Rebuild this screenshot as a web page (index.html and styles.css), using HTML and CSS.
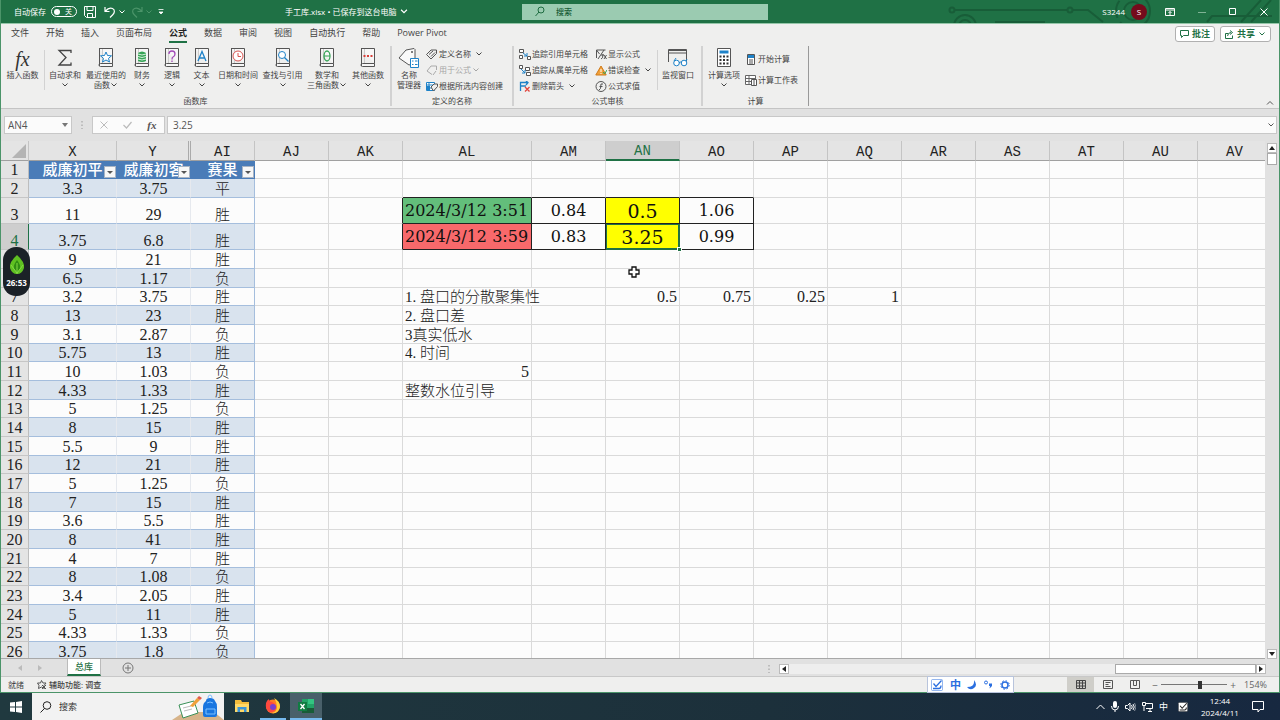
FILE: index.html
```html
<!DOCTYPE html>
<html lang="zh-CN">
<head>
<meta charset="utf-8">
<title>手工库.xlsx</title>
<link rel="stylesheet" href="styles.css">
</head>
<body>
<svg class="defs" width="0" height="0" aria-hidden="true">
  <defs>
    <symbol id="chev" viewBox="0 0 8 6"><path d="M1.500 1.500 4 4l2.500-2.500" fill="none" stroke="currentColor"/></symbol>
    <symbol id="book" viewBox="0 0 16 20"><path d="M1.500 1v17M1 .5h13.500v15H2.500Q1 15.500 1 17t1.500 1.500h12v-3" fill="#f7f7f7" stroke="#555"/><path d="M4.500 1v14" stroke="#ccc"/></symbol>
    <symbol id="tag" viewBox="0 0 22 20"><path d="M1 10 8 2l8-1.500 1 1V15l-6 2z" fill="#fafafa" stroke="#555"/><circle cx="14" cy="4" r="1" fill="#555"/></symbol>
    <symbol id="sogou" viewBox="0 0 12 12"><rect x=".5" y=".5" width="11" height="11" rx="1" fill="#fff" stroke="currentColor" stroke-opacity=".5"/><path d="M2.500 4.500 5 7.500 10.500 1.500M2 9.500h6q2 0 2-3" fill="none" stroke="currentColor" stroke-width="1.300"/></symbol>
  </defs>
</svg>

<div class="app">
  <header class="titlebar">
    <svg class="circuit" width="340" height="23" viewBox="0 0 340 23" fill="none" stroke="#185d38" stroke-width="2"><circle cx="13" cy="10" r="2.500"/><path d="M16 10h112M134 10h15l15 12M56 22h50M268 22l5-6h60M302 22l20-22M312 22l20-22"/><circle cx="131" cy="10" r="2.500"/><circle cx="26" cy="26" r="11"/><circle cx="26" cy="26" r="6"/><circle cx="194" cy="11" r="17" stroke-dasharray="18 5"/><circle cx="194" cy="11" r="9"/></svg>
    <div class="quick">
      <label class="autosave">自动保存 <button class="toggle" aria-label="自动保存"><span class="knob"></span>关</button></label>
      <button class="bare save" aria-label="保存"><svg width="12" height="12" viewBox="0 0 12 12" fill="none" stroke="#fff"><path d="M.5.5h11v11h-9l-2-2zM3 .5v4h6v-4M3.500 11.500V7.500h5v4"/></svg></button>
      <button class="bare undo" aria-label="撤消"><svg width="12" height="12" viewBox="0 0 12 12" fill="none" stroke="#fff" stroke-width="1.200"><path d="M1 1v4.500h4.500M1.500 5Q5 1 8.500 2.500c3 1.500 2 4.500 0 6.500L6 11.500"/></svg><svg width="8" height="6"><use href="#chev"/></svg></button>
      <button class="bare redo" aria-label="恢复"><svg width="12" height="12" viewBox="0 0 12 12" fill="none" stroke="currentColor" stroke-width="1.200"><path d="M11 1v4.500H6.500M10.500 5Q7 1 3.500 2.500c-3 1.500-2 4.500 0 6.500L6 11.500"/></svg><svg width="8" height="6"><use href="#chev"/></svg></button>
      <button class="bare" aria-label="自定义快速访问工具栏"><svg width="8" height="8" viewBox="0 0 8 8"><path d="M1.500 1.500h5M2 4h4L4 6z" fill="#fff" stroke="#fff" stroke-width=".8"/></svg></button>
    </div>
    <button class="bare doc">手工库.xlsx • 已保存到这台电脑<svg width="10" height="7" viewBox="0 0 8 6"><use href="#chev"/></svg></button>
    <label class="search"><svg width="10" height="11" viewBox="0 0 10 11" fill="none" stroke="#1e6b40"><circle cx="6" cy="4" r="3"/><path d="M4 6 .5 10"/></svg><input type="text" placeholder="搜索" aria-label="搜索"></label>
    <div class="account"><span>S3244</span><span class="avatar">S</span>
      <button class="bare" aria-label="功能区显示选项"><svg width="10" height="8" viewBox="0 0 10 8" fill="none" stroke="#fff"><path d="M.5.5h9v7h-9zM.5 2h9M5 7V3.500M3.500 5 5 3.500 6.500 5"/></svg></button>
      <button class="bare" aria-label="最小化"><svg width="8" height="8" viewBox="0 0 8 8" stroke="#7fb395"><path d="M0 4.500h8"/></svg></button>
      <button class="bare" aria-label="最大化"><svg width="8" height="8" viewBox="0 0 8 8" fill="none" stroke="#fff"><path d="M.5.5h6v6h-6z"/></svg></button>
      <button class="bare" aria-label="关闭"><svg width="8" height="8" viewBox="0 0 8 8" stroke="#fff"><path d="m.5.5 7 7m0-7-7 7"/></svg></button>
    </div>
  </header>

  <nav class="tabs">
    <button>文件</button><button>开始</button><button>插入</button><button>页面布局</button><button class="active">公式</button><button>数据</button><button>审阅</button><button>视图</button><button>自动执行</button><button>帮助</button><button>Power Pivot</button>
    <div class="share">
      <button class="pill"><svg width="9" height="8" viewBox="0 0 9 8" fill="none" stroke="currentColor"><path d="M.5.5h8v5h-5l-2 2v-2h-1z"/></svg>批注</button>
      <button class="pill"><svg width="9" height="9" viewBox="0 0 9 9" fill="none" stroke="currentColor"><path d="M3 3.500H.5v5h7v-3M2.500 6Q3 2.500 6 2.500M5 .5l2.500 2L5 4.500"/></svg>共享<svg width="8" height="6"><use href="#chev"/></svg></button>
    </div>
  </nav>

  <section class="ribbon">
    <div class="group">
      <div class="tools">
        <button class="big w43"><span class="fx-large">fx</span>插入函数</button>
        <span class="divider"></span>
        <button class="big w40"><svg width="16" height="20" viewBox="0 0 16 20" fill="none" stroke="#444" stroke-width="1.300"><path d="M14 5V2.500H2L9 9.500 2 17h12v-2.500"/></svg>自动求和<svg width="8" height="6"><use href="#chev"/></svg></button>
        <button class="big w42"><svg width="16" height="20"><use href="#book"/><path d="m8 4 1.500 3.500 4 .3-3 2.600 1 3.600L8 12l-3.500 2 1-3.600-3-2.600 4-.3z" fill="#fff" stroke="#1e82c8"/></svg>最近使用的<span>函数<svg width="8" height="6"><use href="#chev"/></svg></span></button>
        <button class="big w30"><svg width="16" height="20"><use href="#book"/><path d="M4 5q4-3 8 0v8q-4 2-8 0z" fill="#36a456"/><path d="M4 6q4 2 8 0M4 8.500q4 2 8 0M4 11q4 2 8 0" stroke="#d6f2dc" fill="none"/></svg>财务<svg width="8" height="6"><use href="#chev"/></svg></button>
        <button class="big w30"><svg width="16" height="20"><use href="#book"/><path d="M5 6q0-3 3-3t3 3q0 2-2 3-1 .5-1 2.500M8 12.500v1.500" fill="none" stroke="#a24ab8" stroke-width="1.300"/></svg>逻辑<svg width="8" height="6"><use href="#chev"/></svg></button>
        <button class="big w29"><svg width="16" height="20"><use href="#book"/><path d="M4 13 8 3.500 12 13M5.500 10h5" fill="none" stroke="#1e82c8" stroke-width="1.300"/></svg>文本<svg width="8" height="6"><use href="#chev"/></svg></button>
        <button class="big w44"><svg width="16" height="20"><use href="#book"/><circle cx="8" cy="8" r="5" fill="#fff" stroke="#d9534f"/><path d="M8 5v3.500h3" fill="none" stroke="#d9534f"/></svg>日期和时间<svg width="8" height="6"><use href="#chev"/></svg></button>
        <button class="big w45"><svg width="16" height="20"><use href="#book"/><circle cx="7" cy="7" r="3.500" fill="#fff" stroke="#1e82c8"/><path d="m9.500 9.500 4 4" stroke="#1e82c8" stroke-width="1.300"/></svg>查找与引用<svg width="8" height="6"><use href="#chev"/></svg></button>
        <button class="big w44"><svg width="16" height="20"><use href="#book"/><ellipse cx="8" cy="8" rx="3" ry="5" fill="none" stroke="#36a456" stroke-width="1.300"/><path d="M5 8h6" stroke="#36a456"/></svg>数学和<span>三角函数<svg width="8" height="6"><use href="#chev"/></svg></span></button>
        <button class="big w38"><svg width="16" height="20"><use href="#book"/><path d="M3.500 8h2M7 8h2M10.500 8h2" stroke="#d9403a" stroke-width="2"/></svg>其他函数<svg width="8" height="6"><use href="#chev"/></svg></button>
      </div>
      <h2>函数库</h2>
    </div>
    <div class="group">
      <div class="tools">
        <button class="big w34"><svg width="22" height="20" viewBox="0 0 22 20"><use href="#tag"/><path d="M12.500 10.500h8v9h-8z" fill="#fff" stroke="#1e82c8"/><path d="M14 13h1.500M17 13h2.500M14 16.500h1.500M17 16.500h2.500" stroke="#1e82c8"/></svg>名称<span>管理器</span></button>
        <div class="list w83">
          <button><svg width="12" height="11" viewBox="0 0 12 11" fill="none" stroke="#555"><path d="M.5 5.500 5 1h5.500v3.500L5 10zM3 5.500l4-3.500M5 7.500l4-4"/></svg>定义名称<svg width="14" height="6"><use href="#chev"/></svg></button>
          <button class="off" disabled><svg width="12" height="11" viewBox="0 0 12 11" fill="none" stroke="#aaa"><path d="M6 9.500 1 6l4-5h5.500v4M7 10l3-4"/></svg>用于公式<svg width="8" height="6"><use href="#chev"/></svg></button>
          <button><svg width="12" height="11" viewBox="0 0 12 11"><path d="M.5 1.500h8v8h-8zM.5 4h8M.5 7h8M3 1.500v8" fill="#fff" stroke="#1e82c8"/><path d="M1 5h3v4H1z" fill="#1e82c8"/><path d="m5 6 3-3h3.500v2.500L7.500 10z" fill="#eee" stroke="#555"/></svg>根据所选内容创建</button>
        </div>
      </div>
      <h2>定义的名称</h2>
    </div>
    <div class="group">
      <div class="tools audit">
        <div class="list w76">
          <button><svg width="12" height="11" viewBox="0 0 12 11"><path d="M.5.500h4v3h-4zM.5 6.500h3v3h-3zM8.500 7.500h3v3h-3z" fill="#fff" stroke="#555"/><path d="m4 4 4 3M8 4v3H5" fill="none" stroke="#1e82c8"/></svg>追踪引用单元格</button>
          <button><svg width="12" height="11" viewBox="0 0 12 11"><path d="M.5.500h3v3h-3zM6.500 2.500h4v3h-4zM7.500 7.500h4v3h-4z" fill="#fff" stroke="#555"/><path d="m2 4 4 4M6 5v3H3" fill="none" stroke="#1e82c8"/></svg>追踪从属单元格</button>
          <button><svg width="12" height="11" viewBox="0 0 12 11" fill="none"><path d="M1.500 10V1.500H9M7 0l2 1.500L7 4M2 5h5" stroke="#1e82c8" stroke-width="1.300"/><path d="m6 6 4.500 4.500m0-4.500L6 10.500" stroke="#e2443c" stroke-width="1.300"/></svg>删除箭头<svg width="14" height="6"><use href="#chev"/></svg></button>
        </div>
        <div class="list w62">
          <button><svg width="12" height="11" viewBox="0 0 12 11" fill="none" stroke="#555"><path d="M1.500 9V1h9M1.500 1l3 4M3 10l6-9M6 10q2 0 2-5M6 6h3M9 6l2.500 4M11.500 6 9 10"/></svg>显示公式</button>
          <button><svg width="12" height="11" viewBox="0 0 12 11"><path d="M6 1 .8 10h10.400z" fill="#f2a13a" stroke="#cf7a1a"/><path d="M6 4v3M6 8v1" stroke="#fff"/><path d="m8 7 1.500 2L12 5" fill="none" stroke="#36a456"/></svg>错误检查<svg width="14" height="6"><use href="#chev"/></svg></button>
          <button><svg width="12" height="11" viewBox="0 0 12 11" fill="none" stroke="#555"><circle cx="6" cy="5.500" r="5"/><path d="M4 9q2 0 2-6h2M4.500 5.500h3"/></svg>公式求值</button>
        </div>
        <span class="divider"></span>
        <button class="big w40"><svg width="22" height="20" viewBox="0 0 22 20" fill="none"><path d="M1.500 14V1.500h18V14M1 2.500h19M1.500 5h18" stroke="#555"/><circle cx="9.500" cy="15" r="2.800" stroke="#1e82c8" fill="#fff"/><circle cx="17" cy="15" r="2.800" stroke="#1e82c8" fill="#fff"/><path d="m7 13 2-3m6 5q-1.500-2-3 0m7-2 1-2" stroke="#1e82c8"/></svg>监视窗口</button>
      </div>
      <h2>公式审核</h2>
    </div>
    <div class="group dark">
      <div class="tools">
        <button class="big w42"><svg width="16" height="20" viewBox="0 0 16 20"><path d="M1.500.5h13v18h-13z" fill="#fff" stroke="#555"/><path d="M3.500 2.500h9v3h-9z" fill="#1e82c8"/><path d="M3.500 8.500h9M3.500 12h9M3.500 15.500h9" stroke="#333" stroke-width="2" stroke-dasharray="2 1.500"/></svg>计算选项<svg width="8" height="6"><use href="#chev"/></svg></button>
        <div class="list two">
          <button><svg width="12" height="11" viewBox="0 0 12 11"><path d="M2.500.5h7v10h-7z" fill="#fff" stroke="#555"/><path d="M3 1h6v3H3z" fill="#1e82c8"/><path d="M5 5v5M7 5v5" stroke="#555"/></svg>开始计算</button>
          <button><svg width="12" height="11" viewBox="0 0 12 11"><path d="M.5.5h10v9H.5zM.5 3.500h10M.5 6.500h10M4 1v8" fill="#fff" stroke="#666"/><path d="M6.500 4.500h5v6h-5zM9 5v5" fill="#fff" stroke="#555"/></svg>计算工作表</button>
        </div>
      </div>
      <h2>计算</h2>
    </div>
    <button class="collapse" aria-label="折叠功能区"><svg width="8" height="6" viewBox="0 0 8 6"><path d="M1 4.500 4 1.500l3 3" fill="none" stroke="#555"/></svg></button>
  </section>

  <section class="formula">
    <div class="namebox"><input type="text" value="AN4" aria-label="名称框"><svg width="6" height="4"><path d="M0 0h6L3 4z" fill="#777"/></svg></div>
    <svg class="grip" width="4" height="10"><path d="M2 1v8" stroke="#999" stroke-dasharray="1.500 2"/></svg>
    <div class="entry">
      <button aria-label="取消"><svg width="8" height="8"><path d="m.5.5 7 7m0-7-7 7" stroke="#bbb"/></svg></button>
      <button aria-label="输入"><svg width="9" height="8"><path d="m.5 4 3 3 5-6" fill="none" stroke="#bbb" stroke-width="1.200"/></svg></button>
      <button class="fx" aria-label="插入函数">fx</button>
    </div>
    <div class="value"><input type="text" value="3.25" aria-label="编辑栏"><svg width="8" height="6"><use href="#chev"/></svg></div>
  </section>

  <main class="sheet">
    <div class="cells">
      <table>
        <colgroup><col class="c-head"><col class="c-x"><col class="c-std"><col class="c-ai"><col class="c-std"><col class="c-std"><col class="c-al"><col class="c-std" span="10"></colgroup>
        <thead><tr><th class="corner"><svg width="14" height="14"><path d="M14 0v14H0z" fill="#b4b4b4"/></svg></th><th>X<th class="hid">Y<th>AI<th>AJ<th>AK<th>AL<th>AM<th class="sel">AN<th>AO<th>AP<th>AQ<th>AR<th>AS<th>AT<th>AU<th>AV</tr></thead>
        <tbody>
          <tr class="short title"><th>1<td>威廉初平<button class="filter" aria-label="筛选"></button><td>威廉初客<button class="filter" aria-label="筛选"></button><td>赛果<button class="filter" aria-label="筛选"></button>
            <td><td><td> <td><td><td><td><td> <td><td><td><td><td></tr>
          <tr><th>2<td>3.3<td>3.75<td>平
            <td><td><td class="ub lb"> <td class="ub"><td class="ub"><td class="ub"> <td><td> <td><td><td><td><td></tr>
          <tr class="tall"><th>3<td>11<td>29<td>胜
            <td><td class="lb"><td class="box date green">2024/3/12 3:51<td class="box">0.84<td class="box yellow">0.5<td class="box">1.06 <td><td> <td><td><td><td><td></tr>
          <tr class="tall"><th class="sel">4<td>3.75<td>6.8<td>胜
            <td><td class="lb"><td class="box date red">2024/3/12 3:59<td class="box">0.83<td class="box yellow active">3.25<i></i><td class="box">0.99 <td><td> <td><td><td><td><td></tr>
          <tr><th>5<td>9<td>21<td>胜
            <td><td><td> <td><td><td><td><td> <td><td><td><td><td></tr>
          <tr><th>6<td>6.5<td>1.17<td>负
            <td><td><td> <td><td><td><td><td> <td><td><td><td><td></tr>
          <tr class="short"><th>7<td>3.2<td>3.75<td>胜
            <td><td><td class="note spill">1. 盘口的分散聚集性 <td><td class="num">0.5<td class="num">0.75<td class="num">0.25<td class="num">1 <td><td><td><td><td></tr>
          <tr><th>8<td>13<td>23<td>胜
            <td><td><td class="note">2. 盘口差 <td><td><td><td><td> <td><td><td><td><td></tr>
          <tr><th>9<td>3.1<td>2.87<td>负
            <td><td><td class="note">3真实低水 <td><td><td><td><td> <td><td><td><td><td></tr>
          <tr class="short"><th>10<td>5.75<td>13<td>胜
            <td><td><td class="note">4. 时间 <td><td><td><td><td> <td><td><td><td><td></tr>
          <tr><th>11<td>10<td>1.03<td>负
            <td><td><td class="num">5 <td><td><td><td><td> <td><td><td><td><td></tr>
          <tr><th>12<td>4.33<td>1.33<td>胜
            <td><td><td class="note">整数水位引导 <td><td><td><td><td> <td><td><td><td><td></tr>
          <tr class="short"><th>13<td>5<td>1.25<td>负
            <td><td><td> <td><td><td><td><td> <td><td><td><td><td></tr>
          <tr><th>14<td>8<td>15<td>胜
            <td><td><td> <td><td><td><td><td> <td><td><td><td><td></tr>
          <tr><th>15<td>5.5<td>9<td>胜
            <td><td><td> <td><td><td><td><td> <td><td><td><td><td></tr>
          <tr class="short"><th>16<td>12<td>21<td>胜
            <td><td><td> <td><td><td><td><td> <td><td><td><td><td></tr>
          <tr><th>17<td>5<td>1.25<td>负
            <td><td><td> <td><td><td><td><td> <td><td><td><td><td></tr>
          <tr><th>18<td>7<td>15<td>胜
            <td><td><td> <td><td><td><td><td> <td><td><td><td><td></tr>
          <tr class="short"><th>19<td>3.6<td>5.5<td>胜
            <td><td><td> <td><td><td><td><td> <td><td><td><td><td></tr>
          <tr><th>20<td>8<td>41<td>胜
            <td><td><td> <td><td><td><td><td> <td><td><td><td><td></tr>
          <tr><th>21<td>4<td>7<td>胜
            <td><td><td> <td><td><td><td><td> <td><td><td><td><td></tr>
          <tr class="short"><th>22<td>8<td>1.08<td>负
            <td><td><td> <td><td><td><td><td> <td><td><td><td><td></tr>
          <tr><th>23<td>3.4<td>2.05<td>胜
            <td><td><td> <td><td><td><td><td> <td><td><td><td><td></tr>
          <tr><th>24<td>5<td>11<td>胜
            <td><td><td> <td><td><td><td><td> <td><td><td><td><td></tr>
          <tr class="short"><th>25<td>4.33<td>1.33<td>负
            <td><td><td> <td><td><td><td><td> <td><td><td><td><td></tr>
          <tr><th>26<td>3.75<td>1.8<td>负
            <td><td><td> <td><td><td><td><td> <td><td><td><td><td></tr>
        </tbody>
      </table>
    </div>
    <div class="vscroll">
      <button aria-label="向上"><svg width="6" height="4"><path d="M0 4h6L3 0z" fill="#222"/></svg></button>
      <span class="thumb"></span>
      <button class="down" aria-label="向下"><svg width="6" height="4"><path d="M0 0h6L3 4z" fill="#222"/></svg></button>
    </div>
    <svg class="cursor" width="12" height="12" viewBox="0 0 12 12"><path d="M4 1h4v3h3v4H8v3H4V8H1V4h3z" fill="#fff" stroke="#111" stroke-width="1.300"/></svg>
    <div class="recorder"><svg width="16" height="20" viewBox="0 0 16 20"><path d="M8 0q8 7 7 13-2 6-7 6t-7-6Q0 7 8 0z" fill="#5fc021"/><path d="M8 5q4 5 3 9l-3 4-3-4Q4 10 8 5z" fill="#2f8d13"/><path d="M8 8v11M2 10l6 8 6-8" stroke="#86dc44" fill="none"/></svg>26:53</div>
  </main>

  <section class="sheetbar">
    <div class="arrows"><svg width="4" height="6"><path d="M4 0v6L0 3z" fill="#bbb"/></svg><svg width="4" height="6"><path d="M0 0v6l4-3z" fill="#bbb"/></svg></div>
    <button class="sheettab">总库</button>
    <button class="bare add" aria-label="新工作表"><svg width="12" height="12" fill="none" stroke="#777"><circle cx="6" cy="6" r="5"/><path d="M3 6h6M6 3v6"/></svg></button>
    <div class="hscroll">
      <svg width="4" height="10"><path d="M2 1v8" stroke="#999" stroke-dasharray="1.500 2"/></svg>
      <button aria-label="向左"><svg width="4" height="6"><path d="M4 0v6L0 3z" fill="#222"/></svg></button>
      <span class="track"><span class="hthumb"></span></span>
      <button aria-label="向右"><svg width="4" height="6"><path d="M0 0v6l4-3z" fill="#222"/></svg></button>
    </div>
  </section>

  <footer class="status">
    <span class="ready">就绪</span>
    <svg width="10" height="10" fill="none" stroke="#555"><path d="M4.500.5 6 3h3L7 5.500l.5 3-3-1.500-3 1.500.5-3L.5 3h3zM5 5l4 4M9 5 5 9"/></svg><span class="access">辅助功能: 调查</span>
    <div class="views">
      <button class="on" aria-label="普通"><svg width="10" height="10" fill="none" stroke="#444"><path d="M.5.500h9v8h-9zM.5 3h9M.5 6h9M3.500.5v8M6.500.5v8"/></svg></button>
      <button aria-label="页面布局"><svg width="10" height="10" fill="none" stroke="#555"><path d="M.5.500h9v8h-9zM2.500 2.500h5M2.500 4.500h3M2.500 6.500h5"/></svg></button>
      <button aria-label="分页预览"><svg width="10" height="10" fill="none" stroke="#555"><path d="M.5.500h9v8h-9zM3.500.5v5h3v-5"/></svg></button>
    </div>
    <div class="zoom"><button class="bare" aria-label="缩小">−</button><input type="range" min="0" max="100" value="60" aria-label="缩放"><button class="bare" aria-label="放大">+</button><span>154%</span></div>
    <div class="ime"><svg width="12" height="12"><use href="#sogou"/></svg><b>中</b><svg width="10" height="10"><path d="M7 0q4 5 0 8-4 3-7-1 8 0 7-7z" fill="#2b6fe0"/></svg><svg width="9" height="9"><circle cx="2" cy="2.500" r="1.500" fill="none" stroke="#2b6fe0"/><path d="M5 3.500h3V6L5.500 8.500 6 6H5z" fill="#2b6fe0"/></svg><svg width="10" height="10" fill="none" stroke="#2b6fe0"><circle cx="5" cy="5" r="3" stroke-width="1.500"/><circle cx="5" cy="5" r="4.300" stroke-dasharray="1.500 1.900"/></svg></div>
  </footer>
</div>

<div class="taskbar">
  <button class="start" aria-label="开始"><svg width="12" height="12" fill="#fff"><path d="M0 1.500 5 1v4.500H0zM6 1l6-1v5.500H6zM0 6.500h5V11l-5-.5zM6 6.500h6V12l-6-1z"/></svg></button>
  <label class="tsearch"><svg width="12" height="12" fill="none" stroke="#222"><circle cx="7" cy="4.500" r="3.800"/><path d="M4.500 7.500.5 11.500"/></svg><input type="text" placeholder="搜索" aria-label="任务栏搜索">
    <svg width="52" height="26" viewBox="0 0 52 26"><path d="M0 26 12 18h30l10 8z" fill="#d7b48a"/><path d="m7 11 15-4 4 12-15 5z" fill="#fff" stroke="#3b9159"/><path d="m11 14 8-2m-7 5 8-2" stroke="#bbb"/><path d="m18 12 7-8 3 2-7 7z" fill="#f0a03a"/><path d="m25 4 2-2 3 2-2 2z" fill="#e05a4a"/><path d="M34 7q0-3 4-3t5 3q2 2 2 6v8q0 2-2 2H33q-2 0-2-2v-8q0-4 3-6z" fill="#1976e0"/><path d="M36 4q0-3 2-3t2 3M34 15h9v5h-9zM35 9q3-2 6 0" stroke="#7cc0ff" fill="none"/></svg></label>
  <button class="task" aria-label="文件资源管理器"><svg width="16" height="14"><path d="M1 1h6l1 2h7v10H1z" fill="#f3bc3c"/><path d="M1 5h14v8H1z" fill="#ffd968"/><path d="M3.500 13V8h9v5H10v-2.500H6V13z" fill="#3b95d8"/></svg></button>
  <button class="task run" aria-label="Firefox"><svg width="16" height="16"><circle cx="8" cy="8.500" r="7" fill="#ff7a26"/><path d="M9 0q6 3 6 9-2 7-8 6 5-1 5-6T9 0z" fill="#ffcf3a"/><path d="M1 5q1-3 3-4 0 3 3 3 3 1 4 5 0 6-7 5-4-3-3-9z" fill="#ff493f"/><circle cx="8" cy="9" r="3" fill="#7a3fd0"/></svg></button>
  <button class="task run current" aria-label="Excel"><svg width="16" height="14"><path d="M4 0h12v14H4z" fill="#21a366"/><path d="M10 0h6v5h-6z" fill="#33c481"/><path d="M4 9h12v5H4z" fill="#185c37"/><path d="M0 3h9v9H0z" fill="#107c41"/><path d="m2.500 5 4 5m0-5-4 5" stroke="#fff" stroke-width="1.300"/></svg></button>
  <div class="tray">
    <svg width="9" height="6" fill="none" stroke="#fff"><path d="M.5 5 4.500 1l4 4"/></svg>
    <svg width="8" height="11"><rect x="2" y="0" width="4" height="7" rx="2" fill="#fff"/><path d="M.5 5q0 4 3.500 4t3.500-4M4 9v2" fill="none" stroke="#fff"/></svg>
    <svg width="11" height="10" fill="none" stroke="#fff"><path d="M.5 3.500h2L5 1v8L2.500 6.500h-2zM6.500 3q1.500 2 0 4M8 2q2.500 3 0 6"/><path d="M9.500 1q3 4 0 8" opacity=".5"/></svg>
    <svg width="11" height="10" fill="none" stroke="#fff"><path d="M3 1.500h7.500v5H4M6 9.500h4M8 7v2M.5.500h3v3h-3zM2 4v5"/></svg>
    <span>中</span>
    <svg class="pin" width="10" height="10" viewBox="0 0 12 12"><use href="#sogou"/></svg>
    <time>12:44<br>2024/4/11</time>
    <svg width="12" height="12" fill="none" stroke="#fff"><path d="M.5.500h11v8H8l-2 2.500v-2.500H.5z"/></svg>
  </div>
</div>
</body>
</html>
```
FILE: styles.css
```css
* { box-sizing: border-box; }
body {
  margin: 0;
  height: 100vh;
  display: flex;
  flex-direction: column;
  overflow: hidden;
  font: 8px/10px "Open Sans", "Noto Sans CJK SC", sans-serif;
  color: #444;
}
button, input { font: inherit; color: inherit; border: 0; padding: 0; margin: 0; background: none; }
input { min-width: 0; outline: 0; }
svg { flex: none; }
.defs { position: absolute; }
.bare { display: flex; align-items: center; }
.app {
  flex: 1;
  min-height: 0;
  display: flex;
  flex-direction: column;
  border: 1px solid #4b9469;
  border-top: 0;
  background: #e1e1e1;
}

/* Title bar */
.titlebar {
  position: relative;
  height: 24px;
  display: flex;
  align-items: center;
  background: #1f7145;
  border-bottom: 1px solid #94c6a8;
  color: #fff;
}
.circuit { position: absolute; right: 0; top: 0; }
.quick { width: 284px; padding-left: 13px; display: flex; align-items: center; }
.autosave { display: flex; align-items: center; gap: 5px; margin-right: 7px; }
.toggle { width: 26px; height: 11px; border: 1px solid #fff; border-radius: 6px; display: flex; align-items: center; justify-content: space-between; padding: 0 4px 0 2px; font-size: 7px; line-height: 8px; }
.knob { width: 6px; height: 6px; border-radius: 50%; background: #fff; }
.save { margin-right: 8px; }
.undo { gap: 2px; margin-right: 5px; }
.redo { gap: 2px; margin-right: 4px; color: #4b9469; }
.undo, .redo { height: 14px; }
.doc { width: 237px; gap: 3px; }
.search { position: relative; margin-right: auto; width: 246px; height: 16px; display: flex; align-items: center; gap: 11px; padding-left: 13px; background: #9bcbb1; }
.search input { width: 190px; }
.search input::placeholder { color: #185c37; opacity: 1; font-weight: 500; }
.account { position: relative; display: flex; align-items: center; gap: 23px; padding-right: 11px; }
.account span:first-child { margin-right: -17px; }
.avatar { width: 16px; height: 16px; border-radius: 50%; background: #750b1c; text-align: center; line-height: 16px; margin-right: -5px; }

/* Tabs */
.tabs { height: 20px; display: flex; align-items: center; gap: 17px; padding-left: 10px; background: #efefee; font-size: 9px; line-height: 14px; }
.tabs > button { height: 18px; border-bottom: 2px solid transparent; white-space: nowrap; }
.tabs > .active { border-color: #1f7145; font-weight: 700; color: #222; }
.share { display: flex; gap: 5px; margin-left: auto; padding-right: 8px; }
.pill { height: 16px; padding: 0 4px; display: flex; align-items: center; gap: 3px; border: 1px solid #b0b0b0; border-radius: 3px; background: #fff; color: #1f7145; font-weight: 700; }

/* Ribbon */
.ribbon { position: relative; height: 65px; display: flex; background: #efefee; border-bottom: 1px solid #c4c4c4; padding-top: 2px; }
.group { height: 60px; border-right: 2px solid #d2d2d2; display: flex; flex-direction: column; }
.group h2 { margin: auto 0 0; font-size: 8px; line-height: 10px; font-weight: 400; text-align: center; }
.group.dark { border-right: 1px solid #999; }
.tools { display: flex; padding-right: 3px; height: 50px; }
.big { display: flex; flex-direction: column; align-items: center; padding-top: 2px; white-space: nowrap; }
.big > svg:first-child { margin-bottom: 2px; }
.w29 { width: 29px; } .w30 { width: 30px; } .w34 { width: 34px; } .w38 { width: 38px; } .w40 { width: 40px; }
.w42 { width: 42px; } .w43 { width: 43px; } .w44 { width: 44px; } .w45 { width: 45px; } .w62 { width: 62px; } .w76 { width: 76px; } .w83 { width: 83px; }
.big span { display: flex; align-items: center; }
.big > svg:last-child:not(:first-child) { margin-top: 2px; }
.big .fx-large { height: 22px; font: italic 20px/22px "Liberation Serif", serif; color: #333; }
.divider { width: 1px; height: 40px; margin-top: 4px; background: #d2d2d2; }
.list { display: flex; flex-direction: column; }
.list button { height: 16px; display: flex; align-items: center; gap: 1px; white-space: nowrap; }
.list .off { color: #a5a5a5; }
.audit { padding-left: 5px; }
.two { width: 60px; padding-top: 5px; gap: 5px; }
.collapse { position: absolute; right: 5px; bottom: 0; }

/* Formula bar */
.formula { height: 32px; display: flex; align-items: center; padding: 0 2px 0 3px; font-size: 10px; color: #555; }
.namebox, .entry, .value { height: 18px; background: #fbfbfb; border: 1px solid #c8c8c8; display: flex; align-items: center; }
.namebox { width: 68px; padding: 0 3px; }
.namebox input, .value input { flex: 1; }
.grip { margin: 0 8px; }
.entry { width: 73px; justify-content: space-around; margin-right: 2px; }
.fx { font: italic bold 11px "Liberation Serif", serif; }
.value { flex: 1; padding: 0 1px 0 5px; }

/* Worksheet */
.sheet { position: relative; flex: 1; min-height: 0; display: flex; }
.cells { flex: 1; overflow: hidden; border-bottom: 1px solid #a8a8a8; }
table { table-layout: fixed; width: 1271px; border-spacing: 0; font: 300 16px/16px "Liberation Serif", "Noto Sans CJK SC", serif; color: #222; }
.c-head { width: 28px; } .c-x { width: 88px; } .c-std { width: 74px; } .c-ai { width: 64px; } .c-al { width: 129px; }
th { font-weight: 400; background: #e4e4e4; padding: 0; border-right: 1px solid #bdbdbd; border-bottom: 1px solid #c6c6c6; vertical-align: bottom; }
thead th { height: 20px; font: 14px/16px "Liberation Mono", monospace; border-right-color: #c4c4c4; border-bottom-color: #a0a0a0; }
thead .hid { border-right: 3px double #aaa; }
.corner { text-align: right; }
.corner svg { display: block; margin: 0 2px 2px auto; }
thead .sel { background: #cecece; color: #1f7145; border-bottom: 2px solid #1f7145; line-height: 15px; }
tbody .sel { background: #cecece; color: #1f7145; border-right: 1px solid #1f7145; }
td { position: relative; height: 19px; padding: 0; background: #fcfcfc; border-right: 1px solid #dadada; border-bottom: 1px solid #dadada; white-space: nowrap; vertical-align: bottom; }
.short td { height: 18px; }
.tall td { height: 26px; }
td:nth-child(-n+4) { text-align: center; border-bottom-color: #a5bedd; border-right-color: #e6e9ee; }
tbody td:nth-child(4) { font-size: 15px; border-right-color: #a5bedd; }
tbody tr:nth-child(even) td:nth-child(-n+4) { background: #d9e3ee; }
.title td:nth-child(-n+4) { background: #4a7cb8; border-color: #4a7cb8; color: #fff; font-size: 15px; font-weight: 500; }
.filter { position: absolute; right: 0; bottom: 0; width: 12px; height: 12px; background: #f7f7f7; border: 1px solid #a8b4c4; display: flex; align-items: center; justify-content: center; }
.filter::after { content: ""; width: 0; height: 0; border: 3px solid transparent; border-top-color: #555; border-bottom: 0; }
.num { text-align: right; padding-right: 2px; }
.note { padding-left: 2px; font-size: 15px; }
.spill { z-index: 1; overflow: visible; border-right-color: transparent; }
td.ub { border-bottom-color: #222; }
td.box { border-color: #222; vertical-align: middle; text-align: center; color: #111; font-family: "DejaVu Serif", serif; font-weight: 400; font-size: 16px; }
td.lb:not(.ub) { border-right-color: #222; }
td.date { text-align: left; padding-left: 2px; }
td.green { background: #63be7b; }
td.red { background: #f8696b; }
td.yellow { background: #ff0; font-size: 19px; }
td.active { border-color: #1f7145; box-shadow: inset 0 0 0 1px #1f7145; }
.active i { position: absolute; z-index: 1; right: -3px; bottom: -3px; width: 5px; height: 5px; background: #1f7145; border: 1px solid #fff; }
.vscroll { width: 14px; display: flex; flex-direction: column; align-items: center; padding-top: 2px; }
.vscroll button, .hscroll button { width: 10px; height: 10px; border: 1px solid #bbb; background: #fff; display: flex; align-items: center; justify-content: center; }
.thumb { width: 10px; height: 12px; background: #fff; border: 1px solid #aaa; }
.down { margin-top: auto; }
.cursor { position: absolute; left: 627px; top: 125px; }
.recorder { position: absolute; left: 2px; top: 106px; width: 27px; height: 49px; border-radius: 13px; background: #1b2127; color: #fff; font-weight: 700; display: flex; flex-direction: column; align-items: center; justify-content: center; gap: 3px; }

/* Sheet tabs and status */
.sheetbar { height: 18px; display: flex; align-items: flex-start; border-bottom: 1px solid #c8c8c8; }
.arrows { width: 66px; height: 18px; display: flex; align-items: center; gap: 16px; padding-left: 17px; }
.sheettab { width: 34px; height: 17px; background: #fff; border: 1px solid #bbb; border-top: 0; border-bottom: 2px solid #1f7145; color: #1f7145; font-size: 9px; font-weight: 500; }
.add { margin: 3px 0 0 21px; }
.hscroll { width: 499px; margin: 5px 13px 0 auto; display: flex; align-items: center; }
.hscroll > svg { margin-right: 8px; }
.track { flex: 1; height: 10px; background: #eee; display: flex; justify-content: flex-end; }
.hthumb { width: 141px; border: 1px solid #aaa; background: #fff; }
.status { position: relative; height: 15px; display: flex; align-items: center; background: #efefee; padding-left: 7px; }
.ready { width: 29px; }
.access { margin-left: 2px; font-weight: 500; }
.views { margin-left: auto; display: flex; }
.views button { width: 27px; height: 15px; display: flex; align-items: center; justify-content: center; }
.views .on { background: #cfcec9; }
.zoom { display: flex; align-items: center; padding: 0 12px 0 3px; color: #666; }
.zoom .bare { width: 8px; justify-content: center; font-size: 10px; }
.zoom input { width: 66px; height: 10px; margin: 0 2px; appearance: none; background: linear-gradient(#777, #777) center / 100% 1px no-repeat; }
.zoom input::-webkit-slider-thumb { appearance: none; width: 4px; height: 8px; background: #333; }
.zoom span { width: 30px; text-align: right; font-size: 9px; }
.ime { position: absolute; right: 265px; top: -1px; height: 17px; width: 87px; display: flex; align-items: center; justify-content: space-around; border: 1px solid #b8c4dc; background: #fff; color: #2b6fe0; font-size: 11px; line-height: 12px; }

/* Taskbar */
.taskbar { height: 27px; display: flex; background: linear-gradient(90deg, #20393f, #1c303b 60%, #172840); color: #fff; }
.start { width: 32px; display: flex; align-items: center; justify-content: center; }
.tsearch { width: 192px; background: #f2f2f2; color: #333; display: flex; align-items: center; gap: 7px; padding-left: 8px; }
.tsearch input { flex: 1; font-size: 9px; }
.tsearch input::placeholder { color: #333; opacity: 1; }
.task { width: 26px; display: flex; align-items: center; justify-content: center; margin-left: 5px; border-bottom: 2px solid transparent; }
.run { border-color: #76b9ed; }
.current { width: 32px; background: #49606a; margin-left: 4px; }
.tray { margin-left: auto; display: flex; align-items: center; gap: 6px; padding-right: 16px; }
.tray span { font-size: 9px; }
.pin { margin: 0 6px 0 4px; color: #222; }
.tray time { width: 40px; text-align: center; line-height: 12px; margin-right: 6px; }
```
